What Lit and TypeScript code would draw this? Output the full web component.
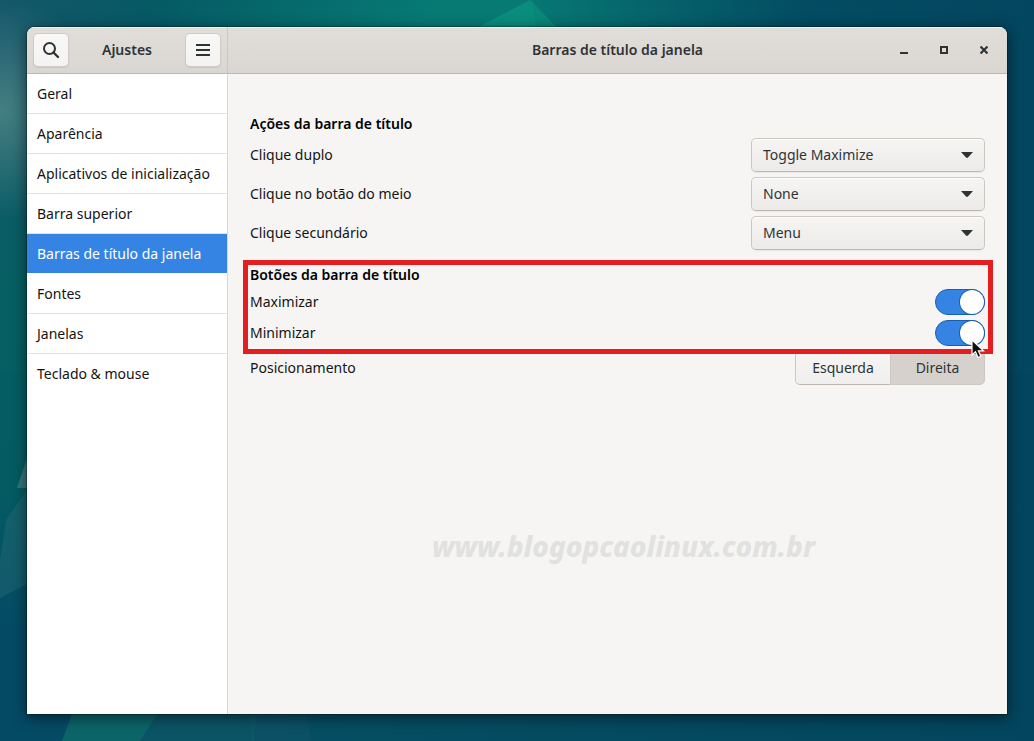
import { LitElement, html, css, svg } from "lit";
import { customElement, state } from "lit/decorators.js";

const PAGES = [
  "Geral",
  "Aparência",
  "Aplicativos de inicialização",
  "Barra superior",
  "Barras de título da janela",
  "Fontes",
  "Janelas",
  "Teclado & mouse",
];

const CLICK_ACTIONS = [
  { id: "double", label: "Clique duplo", value: "Toggle Maximize" },
  { id: "middle", label: "Clique no botão do meio", value: "None" },
  { id: "secondary", label: "Clique secundário", value: "Menu" },
];

const ACTION_VALUES = ["Toggle Maximize", "None", "Menu"];

const wallpaperShapes = svg`
  <polygon points="478,27 530,0 556,27" fill="#0c9480" opacity="0.75" />
  <polygon points="532,0 556,27 536,27" fill="#0a8377" opacity="0.6" />
  <polygon points="27,458 17,488 27,488" fill="#5f8f95" opacity="0.5" />
  <polygon points="6,520 27,490 27,584 0,598 0,560" fill="#2b6b78" opacity="0.4" />
  <polygon points="72,714 158,714 140,741 62,741" fill="#0e6a68" opacity="0.8" />
  <polygon points="158,714 290,714 286,741 140,741" fill="#0c5064" opacity="0.5" />
  <polygon points="250,714 306,714 312,741 252,741" fill="#14546c" opacity="0.4" />
  <polygon points="158,714 257,714 254,741 140,741" fill="#0e6068" opacity="0.4" />
`;

@customElement("app-root")
export class AppRoot extends LitElement {
  static styles = css`
    :host {
      display: block;
      font-family: "Noto Sans", sans-serif;
      font-size: 14px;
      line-height: 19px;
      color: #141414;
    }
    * {
      box-sizing: border-box;
    }
    button,
    select,
    input {
      font: inherit;
      margin: 0;
    }
    h1,
    h2,
    ul {
      font: inherit;
      margin: 0;
      padding: 0;
    }
    .desktop {
      position: relative;
      display: flex;
      min-height: 100vh;
      padding: 27px;
      background:
        radial-gradient(circle at 0 110px, rgba(120, 165, 155, 0.5), transparent 110px),
        linear-gradient(180deg, transparent 10%, rgba(4, 96, 98, 0.9) 40%, rgba(4, 94, 98, 0.9) 65%, transparent 85%) 0 0 / 27px 100% no-repeat,
        linear-gradient(90deg, #14566a 0%, #055a64 15%, #077a74 42%, #077a74 50%, #05606a 65%, #034c62 78%, #03465f 100%) 0 0 / 100% 50% no-repeat,
        linear-gradient(90deg, #044a66 0%, #054e62 30%, #03455e 100%);
    }
    .wallpaper {
      position: absolute;
      inset: 0;
      width: 100%;
      height: 100%;
    }
    .window {
      position: relative;
      flex: 1;
      min-width: 0;
      display: grid;
      grid-template-columns: 201px minmax(0, 1fr);
      grid-template-rows: auto 1fr;
      border-radius: 8px 8px 0 0;
      overflow: hidden;
      background: #f6f5f4;
    }
    .shadow {
      flex: 1;
      min-width: 0;
      display: flex;
      position: relative;
      border-radius: 8px 8px 0 0;
      box-shadow: 0 0 0 1px rgba(0, 0, 0, 0.25), 0 3px 14px 1px rgba(0, 0, 0, 0.5);
    }
    .bar {
      display: grid;
      grid-template-columns: 1fr auto 1fr;
      align-items: center;
      min-height: 47px;
      background: linear-gradient(#e1deda, #dad6d2);
      border-bottom: 1px solid #bfb8b1;
      box-shadow: inset 0 1px #f1f0ee;
      color: #2e3436;
      font-weight: 600;
      line-height: 20px;
    }
    .bar-side {
      padding: 0 6px;
      border-right: 1px solid #cdc7c2;
    }
    .bar-main {
      padding: 0 11px;
    }
    .bar-main h1 {
      grid-column: 2;
    }
    .tool {
      width: 36px;
      height: 34px;
      padding: 0;
      display: grid;
      place-items: center;
      border: 1px solid #d0cbc6;
      border-radius: 5px;
      background: linear-gradient(#f8f8f7, #f4f3f1);
      box-shadow: 0 1px 1px rgba(0, 0, 0, 0.08);
      color: #2e3436;
    }
    .tool-end {
      justify-self: end;
    }
    .controls {
      display: flex;
      gap: 16px;
      justify-self: end;
    }
    .control {
      width: 24px;
      height: 24px;
      padding: 0;
      border: 0;
      display: grid;
      place-items: center;
      background: none;
      color: #2e3436;
    }
    .sidebar {
      background: #fff;
      border-right: 1px solid #d9d6d3;
    }
    .pages {
      list-style: none;
    }
    .page {
      display: block;
      padding: 10px;
      color: inherit;
      text-decoration: none;
      white-space: nowrap;
    }
    .pages li {
      border-bottom: 1px solid #e4e3e1;
    }
    .pages li:last-child,
    .pages .current {
      border-bottom-color: transparent;
    }
    .current .page {
      background: #3584e4;
      color: #fff;
    }
    .content {
      display: flex;
      flex-direction: column;
      gap: 5px;
      padding: 40px 22px;
    }
    .group {
      position: relative;
      display: flex;
      flex-direction: column;
      gap: 5px;
    }
    .marked {
      margin-top: 10px;
    }
    .heading {
      font-weight: 600;
      color: #000;
    }
    .row {
      display: flex;
      align-items: center;
      justify-content: space-between;
      line-height: 20px;
    }
    .picker {
      position: relative;
      width: 234px;
    }
    .select {
      appearance: none;
      display: block;
      width: 100%;
      height: 34px;
      padding: 0 32px 0 11px;
      border: 1px solid #cdc7c2;
      border-bottom-color: #bfb8b1;
      border-radius: 5px;
      background: linear-gradient(#f6f5f3, #edebe9);
      box-shadow: inset 0 1px #fff, 0 1px 1px rgba(0, 0, 0, 0.06);
      color: #2e3436;
    }
    .arrow {
      position: absolute;
      right: 12px;
      top: 14px;
      pointer-events: none;
    }
    .switch {
      appearance: none;
      display: flex;
      width: 50px;
      height: 26px;
      border: 1px solid #cdc7c2;
      border-radius: 13px;
      background: #e1dedb;
    }
    .switch::before {
      content: "";
      width: 24px;
      height: 24px;
      border-radius: 12px;
      background: #fff;
      box-shadow: 0 0 0 1px #cdc7c2;
    }
    .switch:checked {
      justify-content: flex-end;
      border-color: #185fb4;
      background: #3584e4;
    }
    .switch:checked::before {
      box-shadow: 0 0 0 1px #185fb4;
    }
    .outline {
      position: absolute;
      inset: -5px -8px -8px -7px;
      border: 5px solid #e31e20;
      pointer-events: none;
    }
    .pointer {
      position: absolute;
      right: 0;
      bottom: -14px;
      pointer-events: none;
    }
    .segments {
      display: grid;
      grid-template-columns: 1fr 1fr;
      width: 190px;
    }
    .segment {
      height: 34px;
      padding: 0;
      border: 1px solid #cdc7c2;
      border-bottom-color: #bfb8b1;
      background: linear-gradient(#f6f5f3, #f0efed);
      color: #2e3436;
    }
    .segment:first-child {
      border-right: 0;
      border-radius: 5px 0 0 5px;
    }
    .segment:last-child {
      border-radius: 0 5px 5px 0;
    }
    .segment[aria-pressed="true"] {
      background: #d6d1cd;
      border-color: #cdc7c2;
    }
    .watermark {
      margin-top: 136px;
      padding-left: 12px;
      text-align: center;
      font-size: 28px;
      line-height: 40px;
      font-weight: 800;
      font-style: italic;
      color: #e1e1df;
    }
  `;

  @state() private page = "Barras de título da janela";
  @state() private placement = "Direita";

  private renderSidebar() {
    return html`
      <nav class="sidebar">
        <ul class="pages">
          ${PAGES.map(
            (name) => html`
              <li class=${name === this.page ? "current" : ""}>
                <a class="page" href="#" @click=${(e: Event) => { e.preventDefault(); this.page = name; }}>${name}</a>
              </li>
            `
          )}
        </ul>
      </nav>
    `;
  }

  private renderPicker(item: { id: string; label: string; value: string }) {
    return html`
      <div class="row">
        <label for=${item.id}>${item.label}</label>
        <div class="picker">
          <select class="select" id=${item.id}>
            ${ACTION_VALUES.map((v) => html`<option ?selected=${v === item.value}>${v}</option>`)}
          </select>
          <svg class="arrow" width="12" height="6" viewBox="0 0 12 6">
            <path d="M0 0h12L7 5.500Q6 6.300 5 5.500z" fill="#2e3436" />
          </svg>
        </div>
      </div>
    `;
  }

  render() {
    return html`
      <div class="desktop">
        <svg class="wallpaper" viewBox="0 0 1034 741" preserveAspectRatio="none" aria-hidden="true">
          ${wallpaperShapes}
        </svg>
        <div class="shadow">
          <div class="window">
            <header class="bar bar-side">
              <button class="tool" aria-label="Pesquisar">
                <svg width="18" height="18" viewBox="0 0 18 18" fill="none" stroke="currentColor" stroke-width="2">
                  <circle cx="7.500" cy="7.500" r="5.500" />
                  <path d="M11.500 11.500L16 16" stroke-width="2.400" stroke-linecap="round" />
                </svg>
              </button>
              <h2>Ajustes</h2>
              <button class="tool tool-end" aria-label="Menu">
                <svg width="14" height="12" viewBox="0 0 14 12" fill="currentColor">
                  <path d="M0 0h14v2H0zM0 5h14v2H0zM0 10h14v2H0z" />
                </svg>
              </button>
            </header>
            <header class="bar bar-main">
              <h1>Barras de título da janela</h1>
              <div class="controls">
                <button class="control" aria-label="Minimizar janela">
                  <svg width="8" height="8" viewBox="0 0 8 8"><path d="M0 6h8v2H0z" fill="currentColor" /></svg>
                </button>
                <button class="control" aria-label="Maximizar janela">
                  <svg width="8" height="8" viewBox="0 0 8 8"><path d="M1 1h6v6H1z" fill="none" stroke="currentColor" stroke-width="2" /></svg>
                </button>
                <button class="control" aria-label="Fechar janela">
                  <svg width="8" height="8" viewBox="0 0 8 8"><path d="M.5.5l7 7M7.500.5l-7 7" stroke="currentColor" stroke-width="2.200" /></svg>
                </button>
              </div>
            </header>
            ${this.renderSidebar()}
            <main class="content">
              <div class="group">
                <h2 class="heading">Ações da barra de título</h2>
                ${CLICK_ACTIONS.map((item) => this.renderPicker(item))}
              </div>
              <div class="group marked">
                <h2 class="heading">Botões da barra de título</h2>
                <div class="row">
                  <label for="maximize">Maximizar</label>
                  <input class="switch" id="maximize" type="checkbox" role="switch" checked />
                </div>
                <div class="row">
                  <label for="minimize">Minimizar</label>
                  <input class="switch" id="minimize" type="checkbox" role="switch" checked />
                </div>
                <div class="outline"></div>
                <svg class="pointer" width="14" height="21" viewBox="0 0 14 21" aria-hidden="true">
                  <path d="M1 1v15l3.500-3.200L7 18.500l2.800-1.200L7.400 11.800H12.500z" fill="#111" stroke="#fff" stroke-width="1.200" />
                </svg>
              </div>
              <div class="row">
                <span id="placement">Posicionamento</span>
                <div class="segments" role="group" aria-labelledby="placement">
                  ${["Esquerda", "Direita"].map(
                    (side) => html`
                      <button class="segment" aria-pressed=${side === this.placement ? "true" : "false"} @click=${() => { this.placement = side; }}>${side}</button>
                    `
                  )}
                </div>
              </div>
              <div class="watermark">www.blogopcaolinux.com.br</div>
            </main>
          </div>
        </div>
      </div>
    `;
  }
}
